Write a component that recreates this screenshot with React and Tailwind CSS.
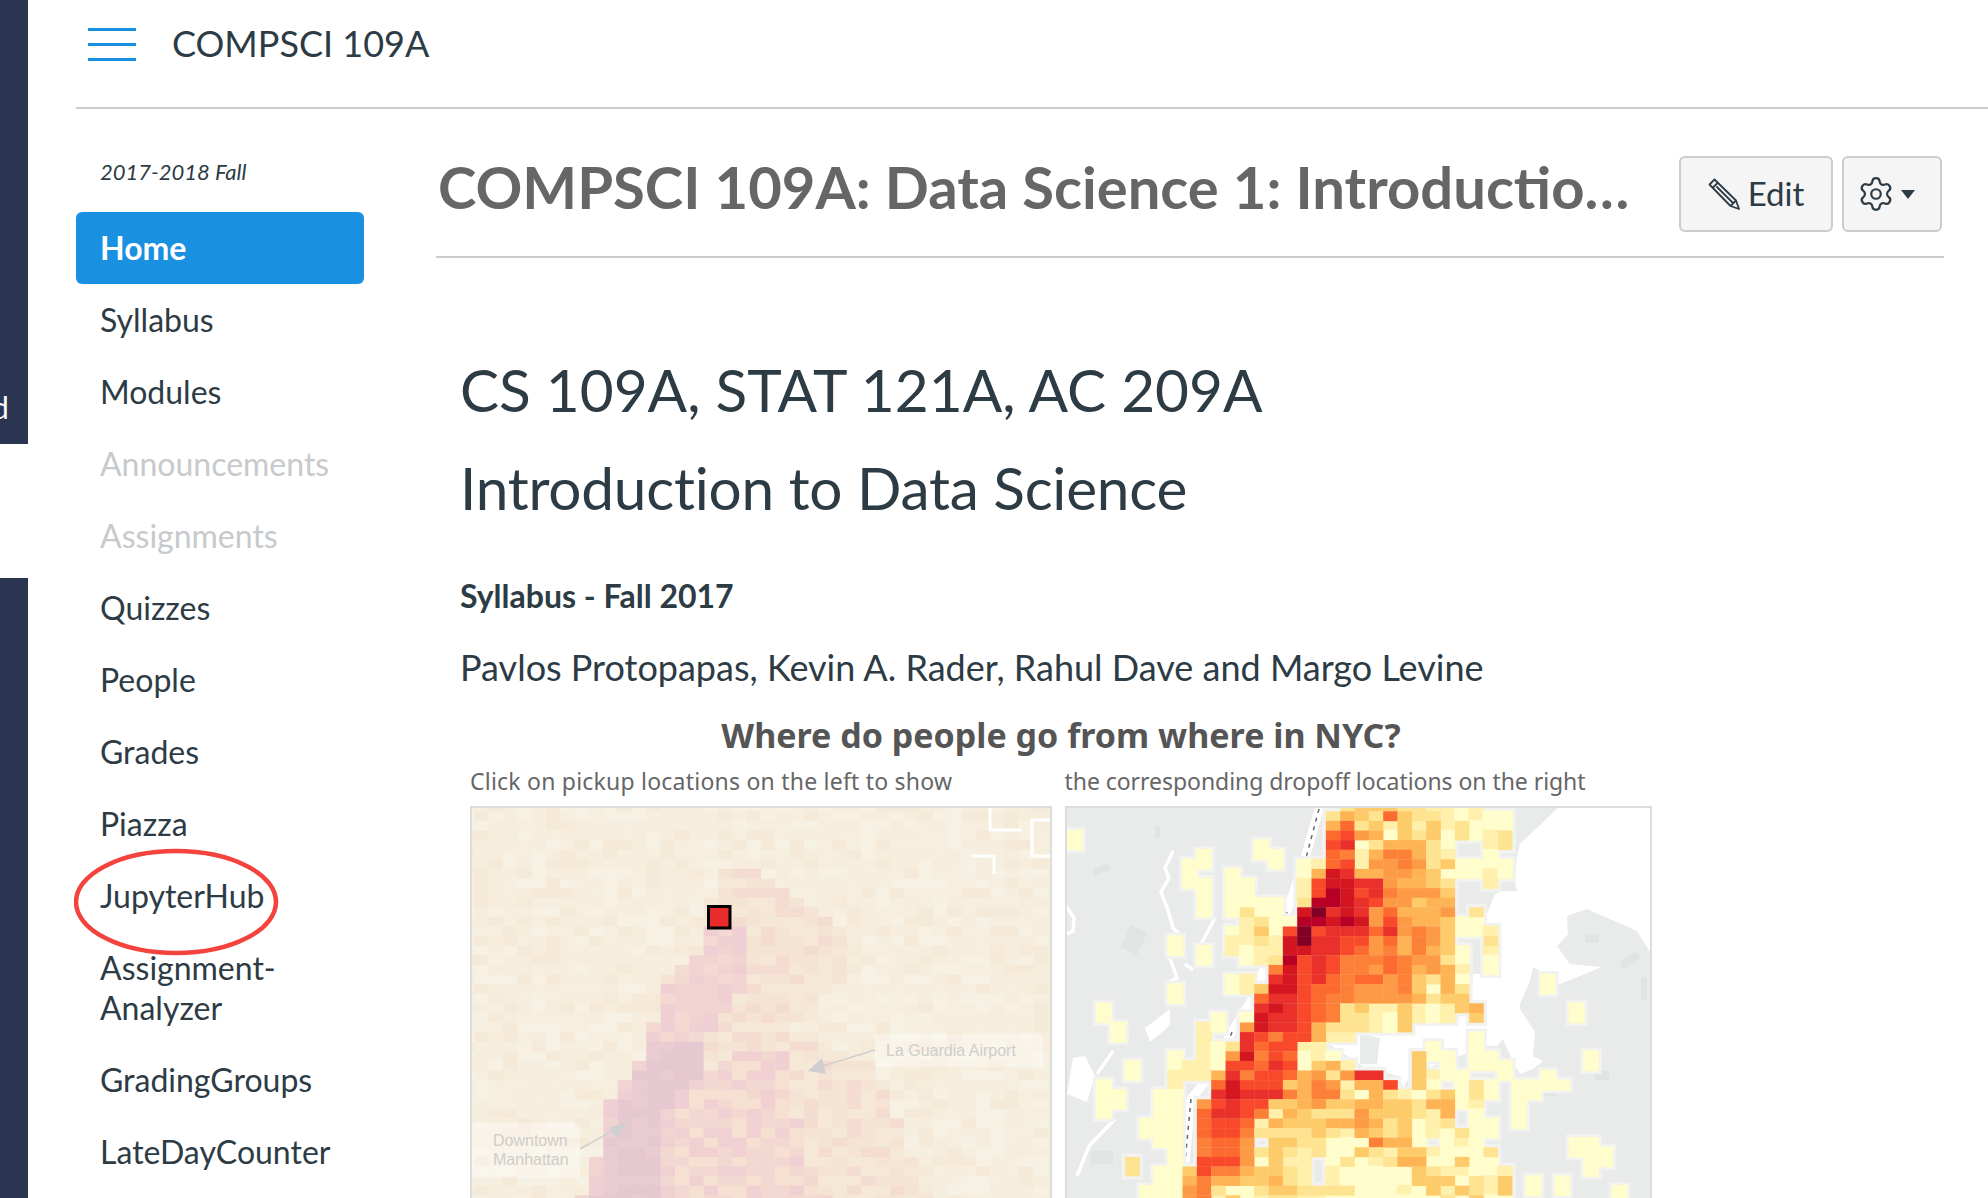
import React from "react";
import { Settings } from "lucide-react";

const navItems = [
    { label: "Home", active: true },
    { label: "Syllabus" },
    { label: "Modules" },
    { label: "Announcements", disabled: true },
    { label: "Assignments", disabled: true },
    { label: "Quizzes" },
    { label: "People" },
    { label: "Grades" },
    { label: "Piazza" },
    { label: "JupyterHub", circled: true },
    { label: "Assignment- Analyzer" },
    { label: "GradingGroups" },
    { label: "LateDayCounter" },
];

const HEAT = {
    a: "#fffdcb", b: "#fff0ae", c: "#fee391", d: "#fecb6a", e: "#feb355", f: "#fd9a45", g: "#fd8039",
    h: "#fc6a30", i: "#f84a2b", j: "#e9302a", k: "#d3161f", l: "#b80026", m: "#800026",
};

// [row, first column, cells], "." leaves the map showing
const DROPOFF = [
    [-1, 19, "cdddccbbab"],
    [0, 18, "cedchdccbabaa"],
    [1, 18, "ehcdbdbdbcaaa"],
    [2, 0, "a"], [2, 18, "hifeadcdacabc"],
    [3, 0, "a"], [3, 13, "a"], [3, 18, "ijaceeeca..bc"],
    [4, 9, "a"], [4, 13, "aa"], [4, 18, "hgbeggecb..a"],
    [5, 8, "aa"], [5, 14, "a"], [5, 16, "abhibffgfcdaaaa"],
    [6, 8, "a"], [6, 11, "a"], [6, 16, "aekjeeffedaaaba"],
    [7, 8, "aa"], [7, 11, "aa"], [7, 16, "bikkjjfeedc..b"],
    [8, 9, "a"], [8, 11, "aa"], [8, 16, "bilkijgfffd"],
    [9, 9, "a"], [9, 11, "aaaa"], [9, 16, "cllkjiffdee"],
    [10, 9, "a"], [10, 11, "acaa"], [10, 16, "kmjkjfheeef"], [10, 28, "c"],
    [11, 12, "bca"], [11, 15, "allklkfifeedaa"],
    [12, 11, "abdaimijjjhjfgfdaab"],
    [13, 7, "a"], [13, 11, "bbcbkmjjiifhegfd"], [13, 29, "c"],
    [14, 7, "a"], [14, 9, "a"], [14, 11, "babbkkjjihfgegeda"], [14, 29, "b"],
    [15, 9, "a"], [15, 12, "abclijiggghgffca"], [15, 29, "a"],
    [16, 14, "gkijiggfhgefeb"], [16, 29, "a"],
    [17, 11, "ab"], [17, 14, "jkijhghhfgdcea"], [17, 33, "a"],
    [18, 7, "a"], [18, 11, "abdkkihhgfffgdaec"], [18, 33, "a"],
    [19, 7, "a"], [19, 13, "hjjihggffffecdd"],
    [20, 2, "a"], [20, 13, "jkjihgcdbbdbabde"], [20, 35, "a"],
    [21, 2, "a"], [21, 10, "a"], [21, 12, "akjjihgccbadbab"], [21, 28, "d"], [21, 35, "a"],
    [22, 3, "a"], [22, 9, "ba"], [22, 12, "fkjjiecccbad"],
    [23, 3, "a"], [23, 9, "b"], [23, 12, "jigiiebb"], [23, 28, "a"],
    [24, 9, "b"], [24, 10, "acjhiibb"], [24, 25, "a"], [24, 28, "a"],
    [25, 7, "a"], [25, 9, "bafkgihaba"], [25, 24, "daa"], [25, 28, "aa"], [25, 36, "a"],
    [26, 4, "a"], [26, 7, "abbaiihjiadeb"], [26, 24, "d"], [26, 26, "a"], [26, 28, "aaa"], [26, 36, "a"],
    [27, 4, "a"], [27, 7, "bbbejgiihefcfjj"], [27, 24, "dbaa"], [27, 30, "a"], [27, 33, "a"],
    [28, 2, "a"], [28, 7, "b"], [28, 10, "hkiiidegfbeei"], [28, 24, "da.aca.aaaa"],
    [29, 2, "aa"], [29, 6, "aa"], [29, 10, "jkjjjgeggcaecbacdaca"], [29, 31, "aa"],
    [30, 2, "aa"], [30, 6, "aa"], [30, 9, "fijiiddefddeeddceeab"], [30, 31, "a"],
    [31, 2, "a"], [31, 6, "aa"], [31, 9, "hjjigbedcccfdddcbe"], [31, 28, "a"], [31, 31, "a"],
    [32, 5, "aaa"], [32, 9, "hiihbedddeefecdabc"], [32, 28, "aa"], [32, 31, "a"],
    [33, 5, "aaa"], [33, 9, "hiigccccdcbedcdabacaa"],
    [34, 6, "aa"], [34, 9, "ghhf.ddccaaageea.aba"], [34, 35, "aa"],
    [35, 7, "a"], [35, 9, "ghhfcdcbcaadcbddbaaac"], [35, 35, "aaa"],
    [36, 4, "c"], [36, 7, "a"], [36, 9, "iiifadbb.acabceeaadaa"], [36, 36, "aa"],
    [37, 4, "c"], [37, 6, "aadiggeddcb.baaaaadcbbaab"], [37, 36, "a"],
    [38, 6, "aaegeeddecb.baaaaadddacbd"], [38, 32, "a"], [38, 34, "a"],
    [39, 5, "aaafgcaacddccccaaabadbdcbd"], [39, 32, "a"], [39, 34, "a"], [39, 38, "a"],
    [40, 5, "aaafgbdabccbbaaaaaaaacadaa"], [40, 38, "a"],
];

const dropoffCells = DROPOFF.flatMap(([row, col, cells]) =>
    [...cells].map((ch, i) => ({ row, col: col + i, ch })).filter((c) => c.ch !== ".")
);
const cellX = (col) => 0.9 + 14.33 * col;
const cellY = (row) => 3.3 + 9.6 * row;

// bands of the pickup map: [row, left, right] in cell columns
const PICKUP_CORE = [[24, 13, 16], [27, 12, 16], [30, 11, 14], [34, 10, 13], [40, 9, 13]];
const PICKUP_STRONG = [[12, 17, 19], [15, 16, 19], [18, 14, 19], [22, 13, 17], [26, 12, 16], [30, 10, 15], [36, 9, 13], [40, 8, 13]];
const PICKUP_BRANCH = [[25, 19, 22], [28, 16, 22], [32, 14, 23], [36, 14, 23], [40, 13, 25]];
const PICKUP_FAINT = [[6, 18, 20], [9, 17, 23], [12, 17, 26], [17, 14, 26], [20, 13, 24], [23, 16, 22], [26, 16, 28], [32, 12, 30], [40, 12, 32]];

const inBand = (band, row, col) => {
    for (let i = 0; i < band.length - 1; i++) {
        const [r0, l0, h0] = band[i];
        const [r1, l1, h1] = band[i + 1];
        if (row >= r0 && row <= r1) {
            const t = (row - r0) / (r1 - r0);
            return col >= l0 + (l1 - l0) * t && col <= h0 + (h1 - h0) * t;
        }
    }
    return false;
};

const noise = (a, b) => {
    const v = Math.sin(a * 127.1 + b * 311.7) * 43758.5453;
    return v - Math.floor(v);
};

const pickupColor = (row, col) => {
    const n = noise(row, col);
    if (inBand(PICKUP_CORE, row, col)) return n > 0.5 ? "#e5c8d0" : "#e9cbd2";
    if (inBand(PICKUP_STRONG, row, col)) {
        if (n > 0.65) return "#efcfd3";
        if (n > 0.3) return "#f1d3d2";
        return "#f3d9d2";
    }
    if (inBand(PICKUP_BRANCH, row, col)) {
        if (n > 0.7) return "#f0d0d2";
        if (n > 0.3) return "#f3d7d1";
        return "#f5e0d1";
    }
    if (inBand(PICKUP_FAINT, row, col)) {
        if (n > 0.7) return "#f4dcd0";
        return n > 0.35 ? "#f5e3d3" : "#f6e8d7";
    }
    if (n > 0.8) return "#f5e9d7";
    if (n > 0.5) return "#f6eddc";
    if (n > 0.2) return "#f6efdf";
    return "#f6f1e3";
};

const PencilIcon = () => (
    <svg width="32" height="32" viewBox="0 0 32 32" fill="none" stroke="#2d3b45" strokeWidth="1.8" strokeLinejoin="round">
        <path d="M1.5 6.5 L6.5 1.5 L28 22.5 L31 31 L22.5 28 Z" />
        <path d="M4.5 10 L10 4.5" />
        <path d="M8.5 8.5 L25.5 25.5" />
        <path d="M28 22.5 L22.5 28" />
    </svg>
);

const PickupMap = () => {
    const cells = [];
    for (let row = -1; row <= 40; row++) {
        for (let col = 0; col < 41; col++) {
            cells.push(
                <rect key={row + "-" + col} x={col * 14.33 - 12} y={cellY(row)} width="14.6" height="9.9" fill={pickupColor(row, col)} />
            );
        }
    }
    return (
        <svg width="578" height="391" viewBox="0 0 578 391" className="block">
            <rect width="578" height="391" fill="#f6eddc" />
            {cells}
            <path d="M518 0 V22 H550 M578 12 H560 V48 H578 M500 48 H522 V66" fill="none" stroke="#ffffff" strokeWidth="3" />
            <rect x="236.5" y="98.5" width="21.5" height="21.5" fill="#e92b2b" stroke="#000000" strokeWidth="3" />
            <rect x="403" y="226" width="168" height="33" fill="#ffffff" fillOpacity="0.35" />
            <path d="M403 242 L338 262" stroke="#cfcfcf" strokeWidth="1.5" />
            <path d="M336 263 L350 250 L354 266 Z" fill="#cfcfcf" />
            <text x="414" y="248" fontFamily="Liberation Sans" fontSize="16" fill="#cfcdcb">La Guardia Airport</text>
            <rect x="0" y="315" width="108" height="55" fill="#ffffff" fillOpacity="0.35" />
            <path d="M108 341 L153 316" stroke="#cfcfcf" strokeWidth="1.5" />
            <path d="M156 315 L144 330 L137 319 Z" fill="#cfcfcf" />
            <text x="21" y="338" fontFamily="Liberation Sans" fontSize="16" fill="#cfcdcb">Downtown</text>
            <text x="21" y="357" fontFamily="Liberation Sans" fontSize="16" fill="#cfcdcb">Manhattan</text>
        </svg>
    );
};

const DropoffMap = () => (
    <svg width="584" height="391" viewBox="2 2 584 391" className="block">
        <rect x="0" y="0" width="588" height="393" fill="#e9eaea" />
        {/* water */}
        <path
            d="M495 0 L455 38 L452 51 L450 75 L452 85 L438 85 L430 88 L422 108 L420 118 L435 118 L435 168 L408 168 L405 191 L395 210 L328 226 L275 226 L261 236 L300 262 L334 270 L338 282 L345 270 L380 255 L422 240 L432 240 L438 233 L450 260 L455 268 L468 263 L478 255 L468 250 L470 226 L455 203 L455 198 L465 175 L468 161 L495 178 L537 161 L505 158 L492 140 L503 128 L502 110 L522 103 L572 125 L588 151 L588 0 Z"
            fill="#ffffff"
        />
        <path d="M295 228 L315 232 L312 258 L295 258 Z" fill="#e9eaea" />
        <path d="M255 0 L240 52 L222 106 L187 193 L167 226 L140 276 L126 293 L120 356" fill="none" stroke="#ffffff" strokeWidth="9" />
        <path d="M254 3 L241 52 M222 106 L218 118 M167 226 L163 236 M126 293 L120 356" fill="none" stroke="#666666" strokeWidth="1.5" strokeDasharray="4 5" />
        <path d="M108 45 L100 62 L104 72 L96 86 L103 104 L108 122 L114 128 M150 112 L136 138 M105 152 L112 172 L100 178 M120 158 L128 164" fill="none" stroke="#ffffff" strokeWidth="3.5" />
        <path d="M1 100 L9 112 L8 125 L1 128 M48 245 L32 268 M50 313 L24 340 L12 370" fill="none" stroke="#ffffff" strokeWidth="3.5" />
        <path d="M8 252 L20 250 L30 270 L22 296 L2 288 Z M105 203 L80 222 L85 236 L100 224 L105 218" fill="#ffffff" />
        <g fill="#e0e4e2">
            <rect x="28" y="60" width="16" height="7" transform="rotate(-20 36 63)" />
            <rect x="60" y="122" width="18" height="24" transform="rotate(25 69 134)" />
            <rect x="90" y="20" width="5" height="12" />
            <rect x="26" y="345" width="22" height="13" />
            <rect x="520" y="128" width="14" height="9" />
            <rect x="555" y="150" width="20" height="8" transform="rotate(-35 565 154)" />
            <rect x="576" y="172" width="6" height="22" />
            <rect x="480" y="280" width="12" height="10" />
            <rect x="530" y="265" width="14" height="9" />
        </g>
        {/* halo around the filled cells */}
        {dropoffCells.map((c, i) => (
            <rect key={"h" + i} x={cellX(c.col) + 2} y={cellY(c.row) + 2} width="14.33" height="9.6" fill="#f2f2f0" stroke="#f2f2f0" strokeWidth="7" />
        ))}
        {dropoffCells.filter((c) => "ab".includes(c.ch)).map((c, i) => (
            <rect key={"p" + i} x={cellX(c.col) + 2} y={cellY(c.row) + 2} width="14.33" height="9.6" fill={HEAT[c.ch]} stroke={HEAT[c.ch]} strokeWidth="1.5" />
        ))}
        {dropoffCells.filter((c) => !"ab".includes(c.ch)).map((c, i) => (
            <rect key={"c" + i} x={cellX(c.col) + 2} y={cellY(c.row) + 2} width="14.63" height="9.9" fill={HEAT[c.ch]} />
        ))}
    </svg>
);

const App = () => {
    return (
        <div className="flex h-[1198px] overflow-hidden bg-white font-['Lato',sans-serif] text-[#2d3b45]">
            {/* cut off rail of the page behind */}
            <div className="flex w-[28px] shrink-0 flex-col overflow-hidden">
                <div className="h-[444px] bg-[#2a3552] pt-[390px] text-[30px] leading-[34px] text-white">
                    <span className="-ml-[8px] block">d</span>
                </div>
                <div className="h-[134px] bg-white"></div>
                <div className="flex-1 bg-[#2a3552]"></div>
            </div>

            <div className="min-w-0 flex-1 pl-[48px]">
                <header className="flex h-[109px] items-center gap-[36px] border-b-2 border-[#c7cdd1] pb-[2px] pl-[12px]">
                    <div className="-mt-[17px] flex w-[48px] flex-col gap-[12px]">
                        <span className="h-[3px] bg-[#1b8fe0]"></span>
                        <span className="h-[3px] bg-[#1b8fe0]"></span>
                        <span className="h-[3px] bg-[#1b8fe0]"></span>
                    </div>
                    <div className="-mt-[19px] text-[36px] leading-[44px]">COMPSCI 109A</div>
                </header>

                <div className="flex">
                    <aside className="w-[288px] shrink-0">
                        <div className="pt-[48px] pb-[25px] pl-[24px] text-[22px] leading-[30px] italic">2017-2018 Fall</div>
                        <ul className="text-[32px] leading-[40px]">
                            {navItems.map((item) => (
                                <li key={item.label} className="relative">
                                    <a
                                        className={
                                            item.active
                                                ? "block rounded-[6px] bg-[#1a90e0] py-4 pl-[24px] font-bold text-white"
                                                : item.disabled
                                                ? "block py-4 pl-[24px] text-[#c6cacd]"
                                                : "block py-4 pl-[24px] pr-[60px]"
                                        }
                                    >
                                        {item.label}
                                    </a>
                                    {item.circled && (
                                        <svg width="210" height="112" viewBox="0 0 210 112" className="absolute top-[-13px] left-[-2px]">
                                            <ellipse cx="102" cy="55" rx="100" ry="51" fill="none" stroke="#f4433c" strokeWidth="4.5" />
                                        </svg>
                                    )}
                                </li>
                            ))}
                        </ul>
                    </aside>

                    <main className="ml-[72px] w-[1508px] shrink-0">
                        <div className="flex items-start border-b-2 border-[#c7cdd1] pt-[47px] pb-[24px]">
                            <h1 className="w-[1200px] truncate pl-[2px] text-[58px] leading-[62px] font-bold text-[#666666]">
                                COMPSCI 109A: Data Science 1: Introduction to Data Science
                            </h1>
                            <div className="ml-[43px] flex gap-[9px]">
                                <button className="flex h-[76px] w-[154px] items-center justify-center gap-[8px] rounded-[6px] border-2 border-[#c7cdd1] bg-[#f5f5f5] text-[33px]">
                                    <PencilIcon />
                                    Edit
                                </button>
                                <button className="flex h-[76px] w-[100px] items-center justify-center gap-[6px] rounded-[6px] border-2 border-[#c7cdd1] bg-[#f5f5f5] pr-[12px]">
                                    <Settings size={38} strokeWidth={1.4} />
                                    <svg width="14" height="9" viewBox="0 0 14 9">
                                        <path d="M0 0 H14 L7 9 Z" fill="#2d3b45" />
                                    </svg>
                                </button>
                            </div>
                        </div>

                        <div className="pl-[24px]">
                            <h2 className="pt-[93px] text-[58.5px] leading-[76px]">CS 109A, STAT 121A, AC 209A</h2>
                            <h2 className="pt-[22px] text-[58.5px] leading-[76px] tracking-[-0.22px]">Introduction to Data Science</h2>
                            <p className="pt-[51px] text-[32px] leading-[40px] font-bold">Syllabus - Fall 2017</p>
                            <p className="pt-[30px] text-[36px] leading-[42px]">Pavlos Protopapas, Kevin A. Rader, Rahul Dave and Margo Levine</p>

                            <div className="ml-[10px] w-[1182px] pt-[25px]">
                                <div className="text-center font-['Noto_Sans',sans-serif] text-[34px] leading-[44px] font-bold text-[#555555]">
                                    Where do people go from where in NYC?
                                </div>
                                <div className="flex gap-[13px] pt-[9px] font-['Noto_Sans',sans-serif] text-[23px] leading-[30px] text-[#666666]">
                                    <span className="w-[582px] tracking-[0.22px]">Click on pickup locations on the left to show</span>
                                    <span className="w-[588px] tracking-[-0.05px]">the corresponding dropoff locations on the right</span>
                                </div>
                                <div className="flex gap-[13px] pt-[10px]">
                                    <div className="w-[582px] overflow-hidden border-2 border-b-0 border-[#dddddd]"><PickupMap /></div>
                                    <div className="w-[588px] overflow-hidden border-2 border-b-0 border-[#dddddd]"><DropoffMap /></div>
                                </div>
                            </div>
                        </div>
                    </main>
                </div>
            </div>
        </div>
    );
};

export default App;
